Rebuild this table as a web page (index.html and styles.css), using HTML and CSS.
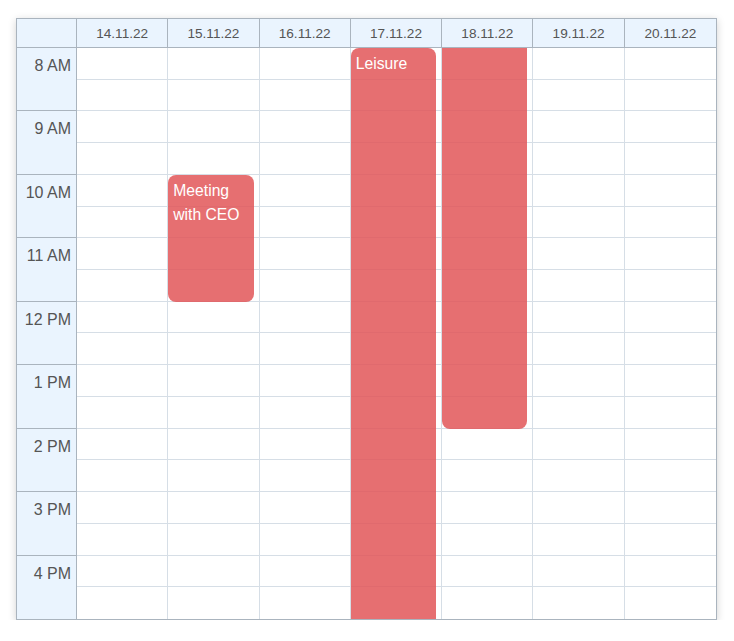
FILE: index.html
```html
<!DOCTYPE html>
<html>
<head>
<meta charset="utf-8">
<link rel="stylesheet" href="styles.css">
</head>
<body>
<div class="cal">
  <div class="head">
    <div class="hcell corner"></div>
    <div class="hcell">14.11.22</div>
    <div class="hcell">15.11.22</div>
    <div class="hcell">16.11.22</div>
    <div class="hcell">17.11.22</div>
    <div class="hcell">18.11.22</div>
    <div class="hcell">19.11.22</div>
    <div class="hcell last">20.11.22</div>
  </div>
  <div class="body">
    <div class="times">
      <div class="hour">8 AM</div>
      <div class="hour">9 AM</div>
      <div class="hour">10 AM</div>
      <div class="hour">11 AM</div>
      <div class="hour">12 PM</div>
      <div class="hour">1 PM</div>
      <div class="hour">2 PM</div>
      <div class="hour">3 PM</div>
      <div class="hour">4 PM</div>
    </div>
    <div class="day"><div class="slots"><div></div><div></div><div></div><div></div><div></div><div></div><div></div><div></div><div></div><div></div><div></div><div></div><div></div><div></div><div></div><div></div><div></div><div></div></div></div>
    <div class="day"><div class="slots"><div></div><div></div><div></div><div></div><div></div><div></div><div></div><div></div><div></div><div></div><div></div><div></div><div></div><div></div><div></div><div></div><div></div><div></div></div>
      <div class="event meeting">Meeting with CEO</div>
    </div>
    <div class="day"><div class="slots"><div></div><div></div><div></div><div></div><div></div><div></div><div></div><div></div><div></div><div></div><div></div><div></div><div></div><div></div><div></div><div></div><div></div><div></div></div></div>
    <div class="day"><div class="slots"><div></div><div></div><div></div><div></div><div></div><div></div><div></div><div></div><div></div><div></div><div></div><div></div><div></div><div></div><div></div><div></div><div></div><div></div></div>
      <div class="event leisure">Leisure</div>
    </div>
    <div class="day"><div class="slots"><div></div><div></div><div></div><div></div><div></div><div></div><div></div><div></div><div></div><div></div><div></div><div></div><div></div><div></div><div></div><div></div><div></div><div></div></div>
      <div class="event early"></div>
    </div>
    <div class="day"><div class="slots"><div></div><div></div><div></div><div></div><div></div><div></div><div></div><div></div><div></div><div></div><div></div><div></div><div></div><div></div><div></div><div></div><div></div><div></div></div></div>
    <div class="day last"><div class="slots"><div></div><div></div><div></div><div></div><div></div><div></div><div></div><div></div><div></div><div></div><div></div><div></div><div></div><div></div><div></div><div></div><div></div><div></div></div></div>
  </div>
</div>
</body>
</html>
```

FILE: styles.css
```css
* { box-sizing: border-box; }
html, body { margin: 0; background: #fff; }
body {
  padding: 18px 0 0 16px;
  font-family: "Liberation Sans", Arial, sans-serif;
}
.cal {
  width: 701px;
  border: 1px solid #aab4be;
  box-shadow: 0 2px 8px rgba(0, 0, 0, 0.18);
  background: #fff;
}
.head {
  display: grid;
  grid-template-columns: 60px repeat(7, 1fr);
  height: 29px;
  background: #eaf4fe;
  border-bottom: 1px solid #aab4be;
}
.hcell {
  display: flex;
  align-items: center;
  justify-content: center;
  font-size: 13.6px;
  color: #555;
  border-right: 1px solid #aab4be;
}
.hcell.last { border-right: none; }
.body {
  display: grid;
  grid-template-columns: 60px repeat(7, 1fr);
  height: 571px;
  overflow: hidden;
}
.times {
  background: #eaf4fe;
  border-right: 1px solid #aab4be;
  display: grid;
  grid-template-rows: repeat(9, 1fr);
}
.hour {
  border-bottom: 1px solid #aab4be;
  text-align: right;
  padding: 8px 5px 0 0;
  font-size: 16px;
  line-height: 20px;
  color: #555;
}
.hour:last-child { border-bottom: none; }
.day {
  position: relative;
  border-right: 1px solid #d6dee6;
}
.day.last { border-right: none; }
.slots {
  height: 100%;
  display: grid;
  grid-template-rows: repeat(18, 1fr);
}
.slots > div { border-bottom: 1px solid #d6dee6; }
.slots > div:last-child { border-bottom: none; }
.event {
  position: absolute;
  left: 0;
  right: 5px;
  background: rgba(226, 86, 88, 0.85);
  color: #fff;
  font-size: 15.7px;
  line-height: 24px;
  padding: 4px 5px 0 5px;
}
.meeting {
  top: calc(100% * 2 / 9);
  height: calc(100% * 2 / 9);
  border-radius: 8px;
}
.leisure {
  top: 0;
  height: 110%;
  border-radius: 8px 8px 0 0;
  padding-top: 4px;
}
.early {
  top: -20px;
  height: calc(100% * 6 / 9 + 20px);
  border-radius: 0 0 8px 8px;
}
```
